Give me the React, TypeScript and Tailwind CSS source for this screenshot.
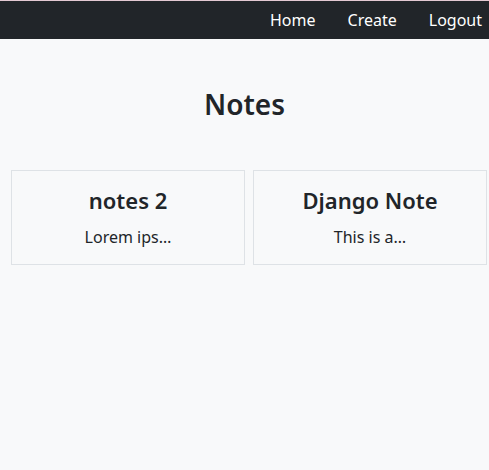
const notes = [
  { title: "notes 2", body: "Lorem ips…" },
  { title: "Django Note", body: "This is a…" },
];

const App = () => {
  return (
    <div className="min-h-[470px] bg-[#f8f9fa] text-[#212529] font-['Noto_Sans',sans-serif]">
      <nav className="h-[39px] bg-[#212529] border-t border-[#e3c9d2] flex items-center justify-end gap-[32px] pr-[7px]">
        <a className="text-white text-[16px]">Home</a>
        <a className="text-white text-[16px]">Create</a>
        <a className="text-white text-[16px]">Logout</a>
      </nav>

      <h1 className="text-center text-[28px] font-semibold mt-[49px] leading-[1.2]">Notes</h1>

      <div className="grid grid-cols-2 gap-[8px] ml-[11px] w-[476px] mt-[48px]">
        {notes.map((n) => (
          <div key={n.title} className="border border-[#dee2e6] h-[95px] flex flex-col items-center pt-[16px]">
            <h5 className="text-[22px] font-semibold leading-[1.2]">{n.title}</h5>
            <p className="text-[16px] mt-[12px] leading-[1.5]">{n.body}</p>
          </div>
        ))}
      </div>
    </div>
  );
};

export default App;
